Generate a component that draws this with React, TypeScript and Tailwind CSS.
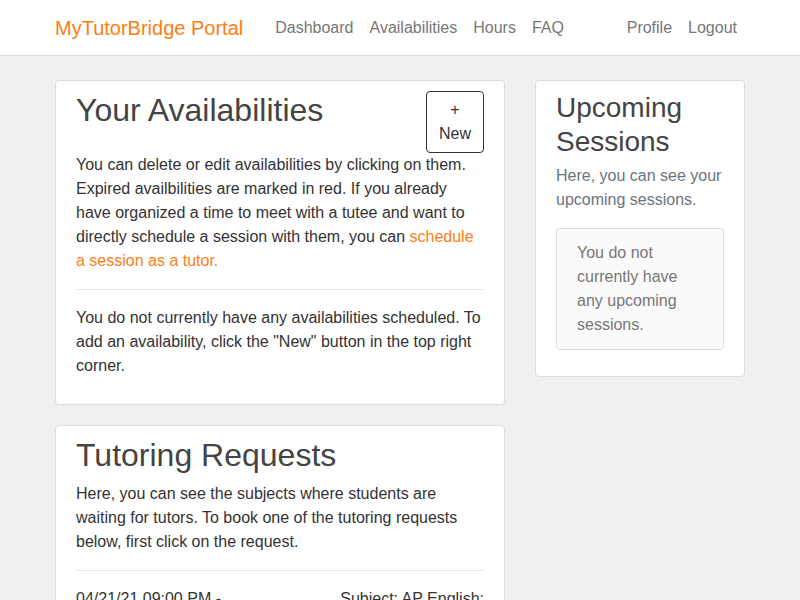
import React from 'react';

const navLinks = ['Dashboard', 'Availabilities', 'Hours', 'FAQ'];

function Navbar() {
  return (
    <nav className="bg-white border-b border-[#dddddd]">
      <div className="max-w-[690px] mx-auto h-[55px] flex items-center">
        <a className="text-[20px] leading-[30px] text-[#fd7e14] mr-6">MyTutorBridge Portal</a>
        <ul className="flex">
          {navLinks.map((l) => (
            <li key={l}>
              <a className="px-2 text-[16px] leading-6 text-[#777777]">{l}</a>
            </li>
          ))}
        </ul>
        <ul className="flex ml-auto">
          <li><a className="px-2 text-[16px] leading-6 text-[#777777]">Profile</a></li>
          <li><a className="px-2 text-[16px] leading-6 text-[#777777]">Logout</a></li>
        </ul>
      </div>
    </nav>
  );
}

function Card({ children }: { children: React.ReactNode }) {
  return (
    <div className="bg-white border border-[#dddddd] rounded-[4px] pt-[10px] pb-[10px] px-5">
      {children}
    </div>
  );
}

export default function App() {
  return (
    <div
      className="min-h-[600px] bg-[#f0f0f0] text-[#333333] text-[16px] leading-6"
      style={{ fontFamily: '"Liberation Sans", Arial, sans-serif' }}
    >
      <Navbar />
      <div className="max-w-[690px] mx-auto pt-6 flex gap-[30px] items-start">
        {/* Left column */}
        <div className="w-[450px] flex flex-col gap-5">
          <Card>
            <div className="flex items-start justify-between">
              <h2 className="text-[32px] leading-[1.2] text-[#444444]">Your Availabilities</h2>
              <button className="border border-[#333333] rounded-[4px] px-3 py-[6px] text-[16px] leading-6 text-[#333333] flex flex-col items-center bg-white">
                <span>+</span>
                <span>New</span>
              </button>
            </div>
            <p>
              You can delete or edit availabilities by clicking on them. Expired availbilities are marked in red. If you
              already have organized a time to meet with a tutee and want to directly schedule a session with them, you
              can <a className="text-[#fd7e14]">schedule a session as a tutor.</a>
            </p>
            <hr className="my-4 border-t border-[#e5e5e5]" />
            <p className="mb-4">
              You do not currently have any availabilities scheduled. To add an availability, click the "New" button in
              the top right corner.
            </p>
          </Card>

          <Card>
            <h2 className="text-[32px] leading-[1.2] text-[#444444] mb-2">Tutoring Requests</h2>
            <p>
              Here, you can see the subjects where students are waiting for tutors. To book one of the tutoring requests
              below, first click on the request.
            </p>
            <hr className="my-4 border-t border-[#e5e5e5]" />
            <div className="flex justify-between">
              <div className="w-[200px]">
                <div>04/21/21 09:00 PM -</div>
                <div>04/21/21 10:00 PM</div>
              </div>
              <div className="w-[200px] text-right">
                <div>Subject: AP English:</div>
                <div>Language and Composition</div>
              </div>
            </div>
          </Card>
        </div>

        {/* Right column */}
        <div className="w-[210px]">
          <Card>
            <h3 className="text-[28px] leading-[1.2] text-[#444444] mb-[6px]">Upcoming Sessions</h3>
            <p className="text-[#6c757d] mb-4">Here, you can see your upcoming sessions.</p>
            <div className="bg-[#fafafa] border border-[#dddddd] rounded-[4px] py-3 px-5 text-[#777777] mb-4">
              You do not currently have any upcoming sessions.
            </div>
          </Card>
        </div>
      </div>
    </div>
  );
}
